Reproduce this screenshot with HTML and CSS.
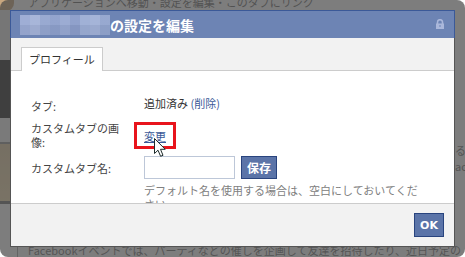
FILE: index.html
```html
<!DOCTYPE html>
<html lang="ja">
<head>
<meta charset="UTF-8">
<meta name="viewport" content="width=device-width, initial-scale=1.0">
<title>タブの設定を編集</title>
<link rel="stylesheet" href="styles.css">
</head>
<body>

<!-- page behind the dialog -->
<div class="page">
<div class="page-nav">
<span class="page-avatar"></span>
<span class="page-links">アプリケーションへ移動・設定を編集・このタブにリンク</span>
</div>
<div class="page-body">
<div class="page-side">
<div class="side-top"></div>
<div class="side-dark"></div>
<div class="side-mid"></div>
<div class="side-photo"></div>
</div>
<div class="page-main"></div>
<div class="page-right">
<p>るこ</p>
<p>ace</p>
</div>
</div>
<div class="page-foot"><span class="foot-text">Facebookイベントでは、パーティなどの催しを企画して友達を招待したり、近日予定の</span></div>
</div>

<div class="overlay">
<div class="dialog">
<div class="dialog-head">
<span class="app-name"></span>
<span class="head-title">の設定を編集</span>
<svg class="lock" width="8" height="10" viewBox="0 0 8 10">
<path d="M1.5 5V3.2a2.5 2.5 0 0 1 5 0V5" fill="none" stroke="#aab7da" stroke-width="1.6"/>
<rect x="0" y="4.5" width="8" height="5.5" fill="#aab7da"/>
<rect x="3.3" y="6" width="1.4" height="2" fill="#7e92c0"/>
</svg>
</div>
<div class="dialog-main">
<div class="tabs">
<div class="tab">プロフィール</div>
</div>
<div class="dialog-body">
<div class="field field-top">
<div class="label">タブ:</div>
<div class="value"><span>追加済み <span class="link">(削除)</span></span></div>
</div>
<div class="field field-image">
<div class="label">カスタムタブの画像:</div>
<div class="value">
<span class="mark">
<a href="#" class="link">変更</a>
<svg class="cursor" width="12" height="19" viewBox="0 0 12 19">
<path d="M0.5 0.5V15.5L4 12.2L6.6 18.3L9 17.3L6.5 11.3H11.2Z" fill="#fff" stroke="#1d2b2b" stroke-width="1" stroke-linejoin="round"/>
</svg>
</span>
</div>
</div>
<div class="field">
<div class="label">カスタムタブ名:</div>
<div class="value">
<input type="text" class="name-input">
<button class="btn btn-save">保存</button>
</div>
</div>
<div class="hint">デフォルト名を使用する場合は、空白にしておいてください</div>
</div>
<div class="dialog-foot">
<button class="btn btn-ok">OK</button>
</div>
</div>
</div>
</div>

</body>
</html>
```

FILE: styles.css
```css
body {
margin: 0;
width: 465px;
height: 257px;
position: relative;
overflow: hidden;
background-color: #fff;
font-family: "Noto Sans CJK JP", "Noto Sans", sans-serif;
font-size: 11px;
color: #333;
}

/* page behind */
.page {
height: 257px;
display: flex;
flex-direction: column;
}
.page-nav {
height: 10px;
display: flex;
overflow: hidden;
}
.page-avatar {
width: 14px;
height: 14px;
margin-top: -3px;
border-radius: 0 0 8px 0;
background-color: #c9a77f;
}
.page-links {
margin-left: 14px;
margin-top: -5px;
line-height: 14px;
color: #707070;
white-space: nowrap;
}
.page-body {
height: 236px;
display: flex;
}
.page-side {
width: 10px;
display: flex;
flex-direction: column;
}
.side-top {
height: 50px;
background-color: #e8e8e8;
}
.side-dark {
height: 58px;
background-color: #303030;
}
.side-mid {
height: 24px;
background-color: #f4f4f4;
border-bottom: 2px solid #999;
}
.side-photo {
height: 57px;
background: linear-gradient(180deg, #e6d0a8, #f2dcae);
border-bottom: 3px solid #777;
}
.page-main {
flex: 1;
}
.page-right {
width: 10px;
padding-top: 132px;
overflow: hidden;
white-space: nowrap;
color: #777;
line-height: 16px;
}
.page-right p {
margin: 0;
}
.page-foot {
flex: 1;
padding-left: 17px;
display: flex;
}
.foot-text {
border-left: 1px solid #aaa;
padding-left: 10px;
padding-top: 1px;
color: #777;
white-space: nowrap;
line-height: 14px;
}

/* dialog */
.overlay {
position: absolute;
top: 0;
left: 0;
width: 465px;
height: 257px;
box-sizing: border-box;
padding: 10px;
border-radius: 8px;
background-color: rgba(70, 70, 70, 0.7);
}
.dialog {
height: 100%;
display: flex;
flex-direction: column;
background-color: #fff;
}
.dialog-head {
height: 27px;
flex-shrink: 0;
border: 1px solid #3b5998;
border-bottom: none;
background-color: #6d84b4;
display: flex;
align-items: center;
padding: 0 10px 0 9px;
color: #fff;
}
.app-name {
width: 90px;
height: 20px;
margin-top: 1px;
background:
linear-gradient(180deg, rgba(255, 255, 255, 0.05) 0 10px, rgba(0, 0, 0, 0.04) 10px 20px),
linear-gradient(90deg, #9aaad3 0 10px, #a3b2d7 10px 20px, #94a5cf 20px 30px, #8d9fcb 30px 40px, #97a8d1 40px 50px, #8a9cc9 50px 60px, #9badd4 60px 70px, #a0b0d6 70px 80px, #92a4ce 80px 90px);
}
.head-title {
flex: 1;
font-size: 14px;
font-weight: bold;
line-height: 20px;
}
.lock {
display: block;
margin-top: -1px;
}
.dialog-main {
flex: 1;
min-height: 0;
overflow: hidden;
display: flex;
flex-direction: column;
border: 1px solid #555;
border-top: none;
}
.tabs {
height: 33px;
flex-shrink: 0;
box-sizing: border-box;
padding: 9px 0 0 10px;
background-color: #f2f2f2;
border-bottom: 1px solid #ccc;
display: flex;
}
.tab {
height: 23px;
line-height: 23px;
padding: 0 7px;
border: 1px solid #ccc;
border-bottom: none;
background-color: #fff;
color: #333;
}
.dialog-body {
flex: 1;
min-height: 0;
overflow: hidden;
padding: 25px 30px 0 20px;
}
.field {
display: flex;
align-items: center;
margin-top: 7px;
}
.field-top {
margin-top: 0;
align-items: flex-start;
}
.field-top .label {
padding-top: 3px;
}
.field-image {
margin-top: 8px;
}
.label {
width: 95px;
margin-right: 18px;
line-height: 14px;
color: #444;
}
.value {
flex: 1;
line-height: 14px;
display: flex;
align-items: center;
}
.link {
color: #3b5998;
}
a.link {
text-decoration: underline;
}
.mark {
position: relative;
display: inline-block;
margin-top: 2px;
}
.mark::after {
content: "";
position: absolute;
top: -7px;
left: -10px;
right: -10px;
bottom: -6px;
border: 3px solid #e8141c;
}
.cursor {
position: absolute;
left: 10px;
top: 9px;
z-index: 2;
}
.name-input {
width: 91px;
height: 23px;
box-sizing: border-box;
margin: 0;
border: 1px solid #bdc7d8;
padding: 2px 3px;
font-size: 11px;
}
.btn {
box-sizing: border-box;
margin: 0;
padding: 0;
border: 1px solid #29447e;
background-color: #5b74a8;
color: #fff;
font-weight: bold;
cursor: pointer;
}
.btn-save {
width: 36px;
height: 23px;
margin-left: 6px;
font-family: "Noto Sans CJK JP", sans-serif;
font-size: 12px;
line-height: 20px;
}
.hint {
margin: 4px 0 0 113px;
line-height: 14px;
color: #808080;
}
.dialog-foot {
height: 43px;
flex-shrink: 0;
box-sizing: border-box;
border-top: 1px solid #ccc;
background-color: #f2f2f2;
padding: 9px 10px 0 0;
display: flex;
justify-content: flex-end;
}
.btn-ok {
width: 30px;
height: 24px;
font-family: "DejaVu Sans", sans-serif;
font-size: 11px;
}
```
